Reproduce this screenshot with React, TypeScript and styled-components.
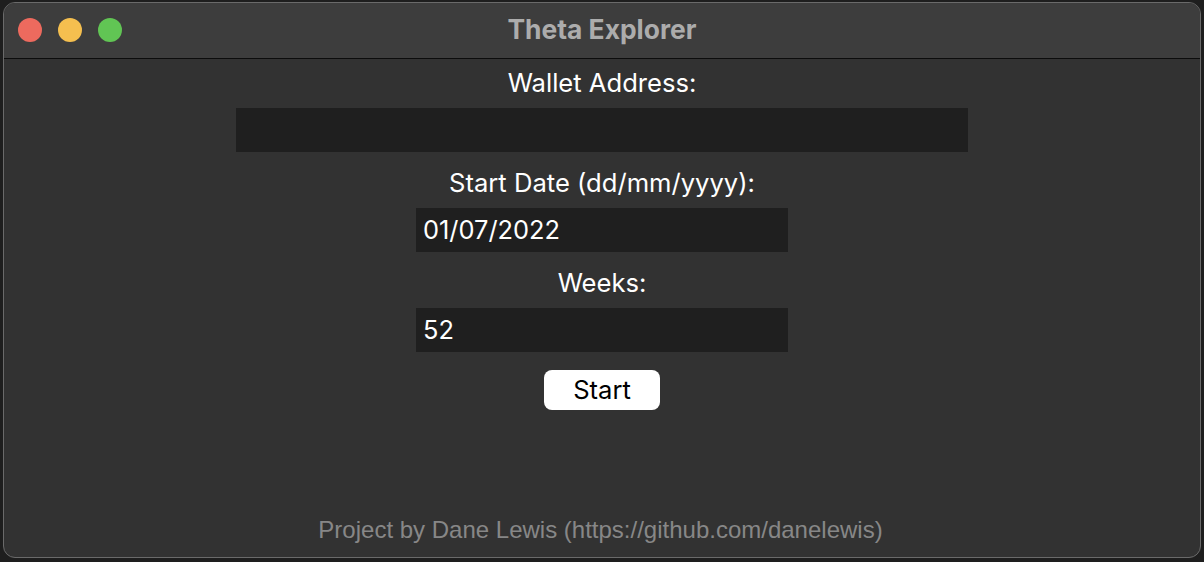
import React from "react";
import styled, { createGlobalStyle } from "styled-components";

const Global = createGlobalStyle`
  html, body { margin: 0; padding: 0; background: #1e1e1e; }
  body { width: 1204px; height: 562px; overflow: hidden; }
`;

const Window = styled.div`
  box-sizing: border-box;
  margin: 2px 0 0 3px;
  width: 1198px;
  height: 556px;
  border: 1px solid #6a6a6a;
  border-radius: 12px;
  overflow: hidden;
  background: #323232;
  display: flex;
  flex-direction: column;
`;

const TitleBar = styled.div`
  position: relative;
  height: 55px;
  flex: none;
  background: #3d3d3d;
  border-bottom: 1px solid #0c0c0c;
  display: flex;
  align-items: center;
  justify-content: center;
`;

const Lights = styled.div`
  position: absolute;
  left: 14px;
  top: 15px;
  display: flex;
  gap: 16px;
`;

const Light = styled.span<{ $c: string }>`
  width: 24px;
  height: 24px;
  border-radius: 50%;
  background: ${(p) => p.$c};
`;

const Title = styled.div`
  font-family: Inter, "Liberation Sans", sans-serif;
  font-weight: 700;
  font-size: 26.4px;
  color: #acacac;
  margin-top: -3px;
`;

const Content = styled.div`
  flex: 1;
  display: flex;
  flex-direction: column;
  align-items: center;
`;

const Label = styled.div<{ $first?: boolean }>`
  font-family: Inter, "Liberation Sans", sans-serif;
  font-size: 25.6px;
  line-height: 30px;
  color: #ffffff;
  margin-top: ${(p) => (p.$first ? 9 : 16)}px;
  margin-bottom: ${(p) => (p.$first ? 10 : 10)}px;
`;

const Field = styled.div<{ $w: number }>`
  box-sizing: border-box;
  width: ${(p) => p.$w}px;
  height: 44px;
  background: #1f1f1f;
  padding: 0 7px 1px;
  display: flex;
  align-items: center;
  font-family: Inter, "Liberation Sans", sans-serif;
  font-size: 25.4px;
  color: #ffffff;
`;

const Button = styled.button`
  margin-top: 18px;
  width: 116px;
  height: 40px;
  border: none;
  border-radius: 8px;
  background: #ffffff;
  color: #000000;
  font-family: Inter, "Liberation Sans", sans-serif;
  font-size: 25.6px;
  padding: 0 0 2px;
`;

const Footer = styled.div`
  margin-top: auto;
  margin-bottom: 11px;
  margin-right: 3px;
  font-family: "Liberation Sans", Arial, sans-serif;
  font-size: 24px;
  line-height: 32px;
  color: #878787;
`;

export default function App() {
  return (
    <>
      <Global />
      <Window>
        <TitleBar>
          <Lights>
            <Light $c="#ed6a5e" />
            <Light $c="#f5bf4f" />
            <Light $c="#61c554" />
          </Lights>
          <Title>Theta Explorer</Title>
        </TitleBar>
        <Content>
          <Label $first>Wallet Address:</Label>
          <Field $w={732} />
          <Label>Start Date (dd/mm/yyyy):</Label>
          <Field $w={372}>01/07/2022</Field>
          <Label>Weeks:</Label>
          <Field $w={372}>52</Field>
          <Button>Start</Button>
          <Footer>Project by Dane Lewis (https://github.com/danelewis)</Footer>
        </Content>
      </Window>
    </>
  );
}
